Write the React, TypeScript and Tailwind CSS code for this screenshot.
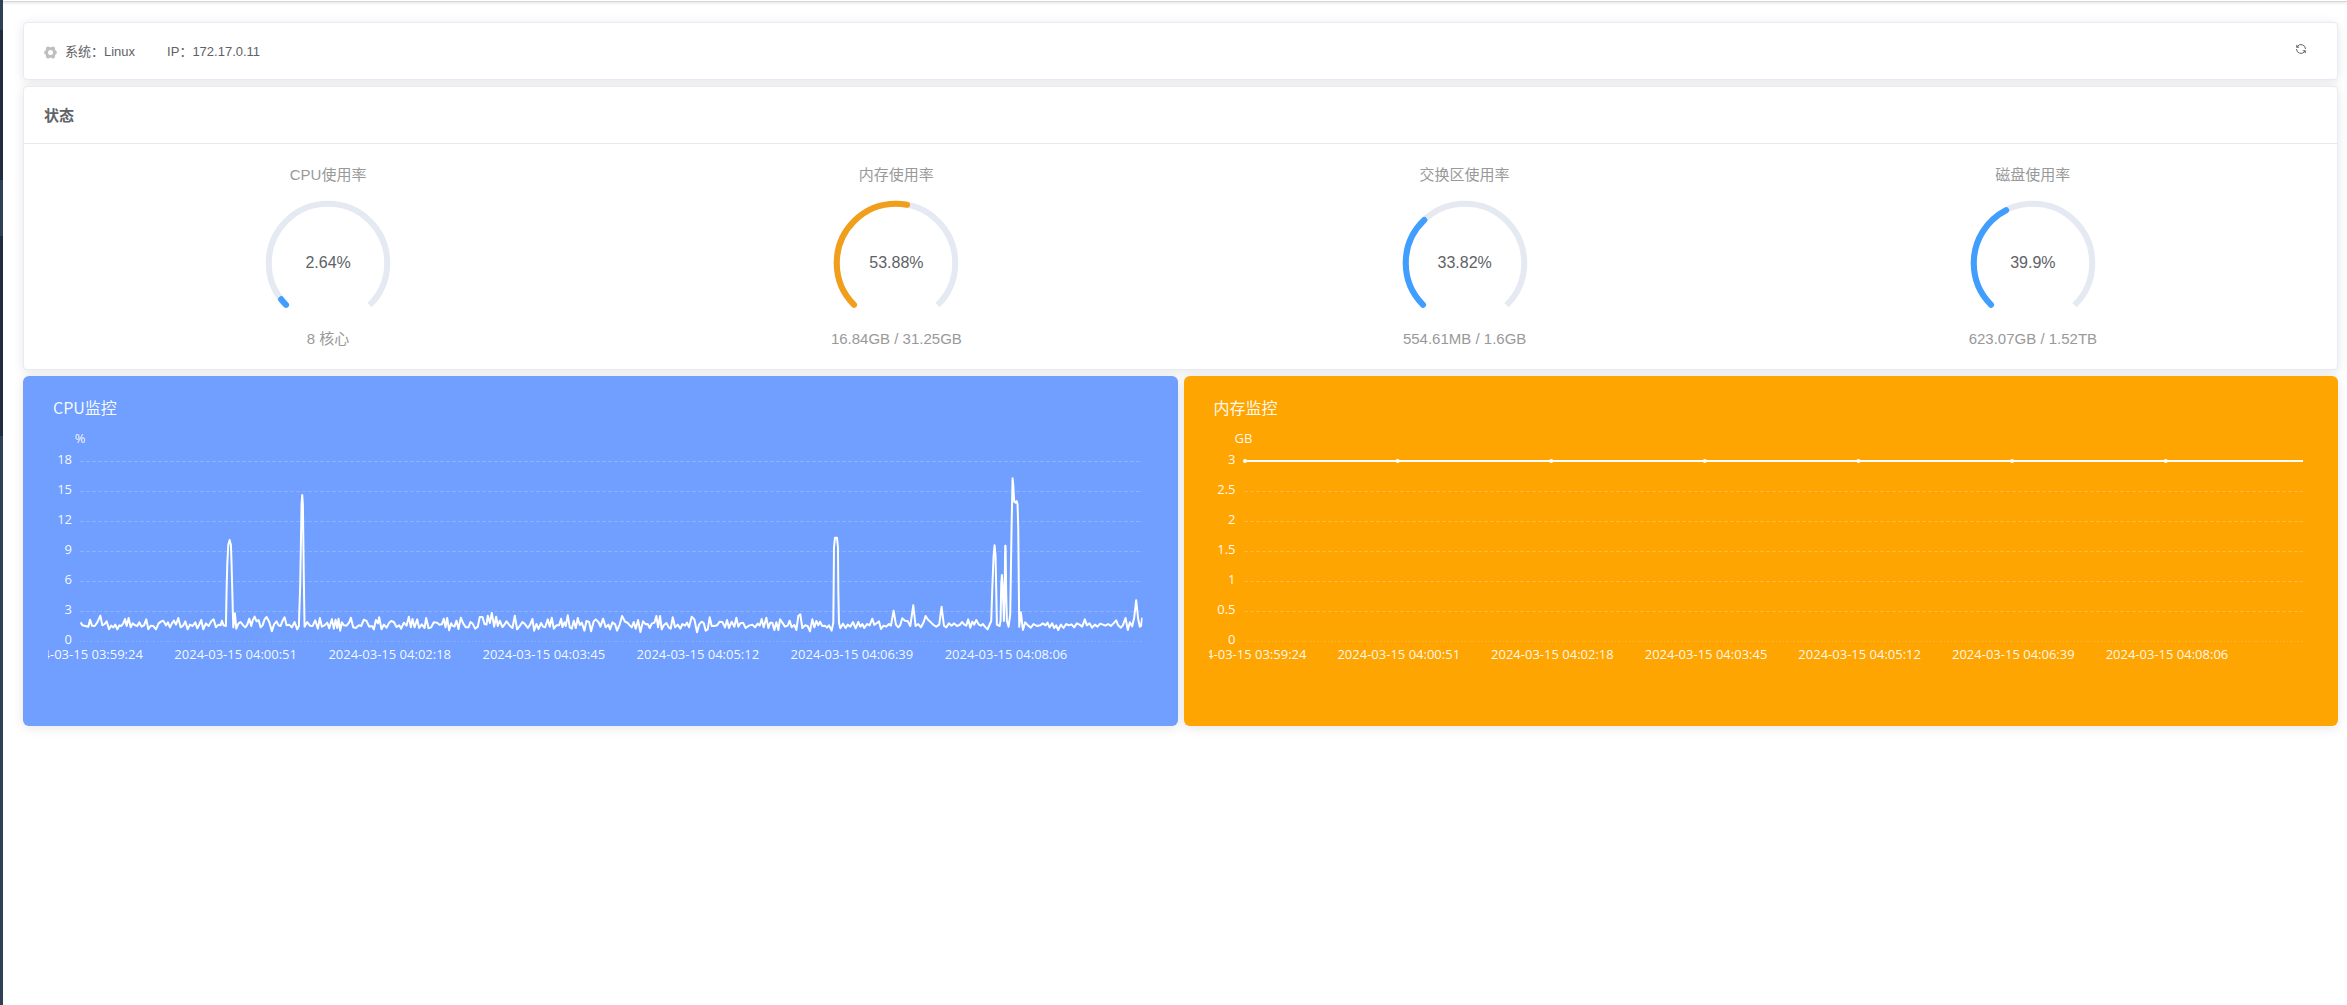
import React from "react";

const TIMES = [
  "2024-03-15 03:59:24",
  "2024-03-15 04:00:51",
  "2024-03-15 04:02:18",
  "2024-03-15 04:03:45",
  "2024-03-15 04:05:12",
  "2024-03-15 04:06:39",
  "2024-03-15 04:08:06",
];

const TICK_POSITIONS = ["14.5%", "29%", "43.5%", "58%", "72.5%", "87%"];

// CPU load samples on a 3189 x 540 canvas; y 540 is 0 % and y 0 is 18 %.
const CPU_POINTS =
  "2,484 7,493 25,497 30,476 36,494 44,495 52,484 61,464 67,493 74,489 80,481 87,505 93,494 100,499 106,491 112,505 118,493 124,495 130,487 135,474 140,495 146,471 152,499 158,487 164,492 172,495 178,484 185,497 192,493 199,475 205,505 212,494 220,495 228,505 236,487 244,481 250,479 258,493 264,484 270,499 276,487 282,479 288,491 295,471 302,499 310,493 316,481 323,505 330,491 338,495 346,484 352,502 358,491 364,477 370,505 378,487 386,495 394,481 401,475 408,499 416,491 422,493 426,479 431,493 438,495 440,387 442,310 445,252 449,237 453,252 455,310 457,387 460,499 465,457 469,503 476,487 482,483 490,493 496,499 502,491 508,473 514,495 518,479 524,467 530,481 536,477 542,499 548,493 554,475 560,468 568,483 576,511 582,491 590,481 596,493 602,495 608,479 614,469 620,493 628,491 636,499 644,483 652,505 657,495 661,370 665,130 667,102 669,130 672,370 674,497 682,483 690,494 698,495 706,478 714,503 720,471 726,497 734,493 742,485 748,502 756,475 762,503 767,476 772,501 776,473 781,509 786,484 792,493 800,494 808,484 813,470 820,499 828,501 836,493 844,495 852,476 860,480 868,497 876,495 882,505 888,477 894,487 898,469 905,505 912,491 920,500 928,485 934,480 942,483 950,498 958,493 964,503 972,485 980,494 987,467 993,499 998,474 1004,499 1012,475 1018,501 1026,490 1034,501 1039,471 1046,502 1054,499 1062,484 1072,485 1078,491 1086,490 1092,473 1097,499 1102,471 1108,508 1114,487 1118,494 1124,497 1130,479 1136,504 1143,470 1150,487 1158,499 1166,499 1172,483 1178,487 1186,503 1194,497 1200,468 1208,468 1214,489 1220,491 1224,464 1230,486 1236,456 1243,497 1249,467 1254,495 1260,479 1268,498 1274,491 1280,481 1290,494 1298,501 1305,464 1312,505 1320,495 1328,483 1336,490 1344,501 1351,491 1358,474 1363,509 1370,489 1376,504 1384,486 1390,497 1396,499 1404,475 1410,497 1416,470 1422,503 1430,493 1438,493 1444,473 1448,498 1454,484 1458,495 1464,463 1470,499 1476,503 1482,479 1488,501 1494,471 1500,492 1506,485 1514,509 1520,480 1528,483 1534,511 1542,481 1548,475 1556,483 1562,497 1570,473 1578,499 1586,491 1591,505 1598,484 1606,490 1612,509 1620,490 1627,465 1636,482 1644,486 1650,493 1656,499 1662,483 1668,503 1675,477 1682,513 1690,481 1698,490 1704,489 1710,501 1716,488 1724,485 1730,465 1735,499 1741,465 1746,505 1752,493 1760,486 1767,499 1773,503 1779,469 1786,499 1794,491 1802,503 1808,489 1816,494 1822,485 1828,499 1836,467 1844,475 1852,514 1858,491 1866,482 1872,486 1878,509 1884,505 1890,469 1896,495 1904,495 1912,493 1920,482 1928,483 1936,499 1942,477 1948,501 1956,482 1964,497 1970,470 1976,497 1982,487 1990,485 1998,501 2008,494 2018,491 2026,499 2034,488 2040,494 2046,474 2052,499 2060,470 2066,501 2072,485 2078,485 2084,507 2090,484 2096,507 2101,475 2108,485 2116,497 2124,494 2130,479 2136,499 2144,492 2150,507 2156,465 2162,460 2168,501 2176,493 2184,495 2191,511 2198,475 2204,499 2210,480 2216,493 2221,482 2228,495 2236,494 2242,500 2248,493 2256,509 2261,485 2262,387 2263,260 2266,230 2272,230 2275,260 2276,387 2278,485 2282,502 2290,488 2298,501 2304,491 2312,497 2320,483 2328,502 2336,483 2342,497 2348,489 2354,501 2362,489 2370,493 2378,473 2384,492 2392,486 2398,481 2404,504 2412,494 2420,497 2428,489 2434,494 2442,449 2449,491 2456,499 2462,492 2468,472 2476,479 2484,480 2492,495 2501,433 2508,495 2516,489 2524,499 2532,484 2538,465 2546,477 2554,484 2562,492 2570,497 2579,491 2586,437 2593,494 2600,499 2608,487 2616,494 2624,487 2632,495 2640,492 2648,483 2654,491 2660,494 2666,475 2672,500 2678,482 2684,491 2690,477 2697,490 2704,494 2710,489 2716,497 2724,505 2731,489 2735,480 2738,387 2742,285 2745,253 2748,285 2750,387 2752,491 2760,495 2763,480 2765,370 2767,342 2769,370 2773,480 2775,400 2777,254 2778,254 2780,400 2782,480 2787,497 2792,460 2796,200 2799,52 2801,70 2804,122 2808,125 2811,120 2814,130 2816,200 2819,497 2824,454 2830,507 2837,484 2846,494 2854,500 2862,489 2872,495 2882,493 2890,487 2898,493 2904,485 2910,499 2918,487 2924,501 2930,493 2936,507 2944,491 2952,501 2960,489 2968,493 2976,490 2984,499 2992,487 3000,491 3008,497 3016,475 3022,493 3030,487 3038,500 3046,491 3054,497 3062,488 3070,491 3078,494 3086,489 3094,495 3102,487 3110,478 3116,493 3124,500 3130,493 3138,471 3145,507 3151,484 3158,496 3164,470 3170,418 3176,474 3181,497 3185,494 3188,470";

const GAUGE_LENGTH = 2 * Math.PI * 47;
const GAUGE_ARC = GAUGE_LENGTH * 0.75;
const GAUGE_PATH = "M50 50 m0 47 a47 47 0 1 1 0 -94 a47 47 0 1 1 0 94";

type GaugeProps = { title: string; value: number; detail: string; color: string };

function Gauge({ title, value, detail, color }: GaugeProps) {
  const offset = -GAUGE_LENGTH * 0.125;
  return (
    <div className="flex flex-col items-center text-[15px] leading-5 text-[#999999]">
      <h3>{title}</h3>
      <div className="mt-[15px] grid size-[126px] place-items-center *:col-start-1 *:row-start-1">
        <svg viewBox="0 0 100 100" className="size-full" fill="none" strokeWidth="4.8" aria-hidden="true">
          <path
            d={GAUGE_PATH}
            stroke="#e5e9f2"
            strokeDasharray={`${GAUGE_ARC} ${GAUGE_LENGTH}`}
            strokeDashoffset={offset}
          />
          <path
            d={GAUGE_PATH}
            stroke={color}
            strokeLinecap="round"
            strokeDasharray={`${(GAUGE_ARC * value) / 100} ${GAUGE_LENGTH}`}
            strokeDashoffset={offset}
          />
        </svg>
        <span className="text-base text-[#606266]">{value}%</span>
      </div>
      <p className="mt-[3px]">{detail}</p>
    </div>
  );
}

type ChartProps = {
  title: string;
  unit: string;
  labels: string[];
  cardClass: string;
  gridClass: string;
  children: React.ReactNode;
};

function ChartCard({ title, unit, labels, cardClass, gridClass, children }: ChartProps) {
  return (
    <section
      className={`h-[350px] min-w-0 flex-1 rounded-md pt-5 pr-[35px] pl-[25px] text-white/95 shadow-[0_2px_12px_rgba(0,0,0,0.1)] ${cardClass}`}
    >
      <h2 className="pl-[5px] text-base leading-[22px]">{title}</h2>
      <div
        className={`mt-[11px] grid overflow-x-clip font-['Open_Sans',sans-serif] text-[13px] leading-[18px] ${gridClass}`}
      >
        <div className="col-start-2 -ml-5 h-[15px] w-10 text-center">{unit}</div>
        <ul className="col-start-1 row-start-2 pr-2 text-right">
          {labels.map((label) => (
            <li key={label} className="flex h-[30px] items-center justify-end">
              {label}
            </li>
          ))}
        </ul>
        <div className="col-start-2 row-start-2 min-w-0 pt-[17px]">
          <svg className="block h-[180px] w-full overflow-visible" fill="none" aria-hidden="true">
            {labels.map((label, i) => (
              <line
                key={label}
                x1="0"
                x2="100%"
                y1={i * 30 + 0.5}
                y2={i * 30 + 0.5}
                stroke="#ffffff"
                strokeOpacity={i === labels.length - 1 ? 0.16 : 0.2}
                strokeDasharray={i === labels.length - 1 ? "1 2 2 2" : "4 2"}
              />
            ))}
            {children}
          </svg>
          <div className="mt-1 -ml-[7.1%] flex">
            {TIMES.map((time) => (
              <span key={time} className="flex w-[13.54%] shrink-0 justify-center whitespace-nowrap">
                {time}
              </span>
            ))}
          </div>
        </div>
      </div>
    </section>
  );
}

export default function App() {
  return (
    <div className="flex min-h-screen bg-white font-['Liberation_Sans','Noto_Sans_CJK_SC',sans-serif] text-[#606266]">
      <aside className="flex w-[3px] shrink-0 flex-col bg-[#304156]">
        <div className="h-[30px]" />
        <div className="h-[150px] bg-[#1f2d3d]" />
        <div className="h-14" />
        <div className="h-[200px] bg-[#1f2d3d]" />
      </aside>
      <div className="min-w-0 flex-1">
        <header className="h-[2px] border-b border-[#d3d7dc] shadow-[0_1px_3px_rgba(0,21,41,0.14)]" />
        <main className="flex flex-col gap-1.5 pt-5 pr-[9px] pl-5">
          <section className="flex h-[58px] items-center justify-between rounded border border-[#e6ebf5] bg-white px-5 text-[13px] leading-5 shadow-[0_2px_12px_rgba(0,0,0,0.1)]">
            <div className="flex items-center pt-0.5">
              <svg viewBox="0 0 26 26" className="size-[13px]" fill="#bfbfbf" aria-hidden="true">
                <path
                  fillRule="evenodd"
                  d="M6 1.500Q8 0 10 1.500L11.500 2.500h3L16 1.500Q18 0 20 1.500Q22.500 3 22 6L22.300 8L24.500 10Q27 13 24.500 16L22.300 18L22 20Q22.500 23 20 24.500Q18 26 16 24.500L14.500 23.500h-3L10 24.500Q8 26 6 24.500Q3.500 23 4 20L3.700 18L1.500 16Q-1 13 1.500 10L3.700 8L4 6Q3.500 3 6 1.500z M13 8a5 5 0 1 0 0 10a5 5 0 0 0 0-10z"
                />
              </svg>
              <span className="ml-2">系统：Linux</span>
              <span className="ml-8">IP：172.17.0.11</span>
            </div>
            <button type="button" aria-label="刷新" className="mr-2.5 mb-1 cursor-pointer">
              <svg viewBox="0 0 24 24" className="size-3" fill="none" stroke="#606266" strokeWidth="2" aria-hidden="true">
                <path d="M5 6.500A9 9 0 0 1 21 12M3 12A9 9 0 0 0 19 17.500" />
                <path d="M2.500 3v6.500H9zM21.500 21v-6.500H15z" fill="#606266" stroke="none" />
              </svg>
            </button>
          </section>

          <section className="rounded border border-[#e6ebf5] bg-white shadow-[0_2px_12px_rgba(0,0,0,0.1)]">
            <h2 className="flex h-[57px] items-center border-b border-[#e6e8ed] px-5 pt-0.5 text-[15px] leading-5 font-bold">
              状态
            </h2>
            <div className="grid grid-cols-4 px-5 pt-[21px] pb-5">
              <Gauge title="CPU使用率" value={2.64} detail="8 核心" color="#409eff" />
              <Gauge title="内存使用率" value={53.88} detail="16.84GB / 31.25GB" color="#f19e1b" />
              <Gauge title="交换区使用率" value={33.82} detail="554.61MB / 1.6GB" color="#409eff" />
              <Gauge title="磁盘使用率" value={39.9} detail="623.07GB / 1.52TB" color="#409eff" />
            </div>
          </section>

          <div className="flex gap-1.5 font-['Noto_Sans_CJK_SC',sans-serif]">
            <ChartCard
              title="CPU监控"
              unit="%"
              labels={["18", "15", "12", "9", "6", "3", "0"]}
              cardClass="bg-[#709fff]"
              gridClass="grid-cols-[32px_minmax(0,1fr)]"
            >
              <svg width="100%" height="180" viewBox="0 0 3189 540" preserveAspectRatio="none">
                <polyline
                  points={CPU_POINTS}
                  stroke="#ffffff"
                  strokeWidth="2"
                  strokeLinejoin="round"
                  vectorEffect="non-scaling-stroke"
                />
              </svg>
            </ChartCard>
            <ChartCard
              title="内存监控"
              unit="GB"
              labels={["3", "2.5", "2", "1.5", "1", "0.5", "0"]}
              cardClass="bg-[#ffa502]"
              gridClass="grid-cols-[35px_minmax(0,1fr)]"
            >
              <line x1="0" x2="100%" y1="0" y2="0" stroke="#ffffff" strokeWidth="2" />
              <circle cx="1" cy="0" r="2" fill="#ffffff" />
              {TICK_POSITIONS.map((x) => (
                <circle key={x} cx={x} cy="0" r="2" fill="#ffffff" />
              ))}
            </ChartCard>
          </div>
        </main>
      </div>
    </div>
  );
}
